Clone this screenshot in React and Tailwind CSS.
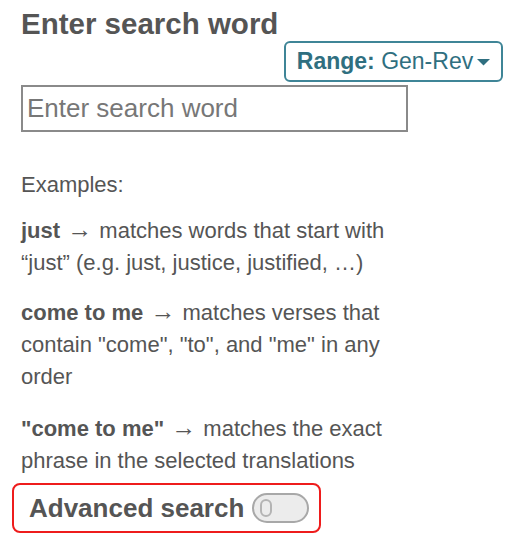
import React, { useState } from 'react';

const Arrow = () => <span className="text-[25px] leading-none px-[1px]">→</span>;

const App = () => {
  const [advanced, setAdvanced] = useState(false);

  return (
    <div className="w-[520px] h-[546px] bg-white text-[#555] font-['Liberation_Sans',Arial,sans-serif] overflow-hidden">
      <div className="pl-[21px] pr-[17px] pt-[5px]">
        {/* Heading */}
        <h2 className="text-[29.5px] font-bold leading-[38px] text-[#555]">Enter search word</h2>

        {/* Range button */}
        <div className="flex justify-end mt-[-2px]">
          <button className="h-[41px] w-[219px] flex items-center justify-center gap-[4px] border-2 border-[#3f8597] rounded-[6px] text-[23px] text-[#2f6f80]">
            <span>
              <span className="font-bold">Range:</span> Gen-Rev
            </span>
            <svg width="13" height="7" viewBox="0 0 13 7" className="mt-[2px]">
              <path d="M0 0 L13 0 L6.5 6.5 Z" fill="#2f6f80" />
            </svg>
          </button>
        </div>

        {/* Search input */}
        <input
          type="text"
          placeholder="Enter search word"
          className="mt-[3px] block w-[387px] h-[47px] border-2 border-[#8a8a8a] px-[4px] text-[26px] placeholder:text-[#777] outline-none"
        />

        {/* Examples */}
        <div className="mt-[37px] w-[400px] text-[22px] leading-[32px] text-[#555]">
          <p>Examples:</p>
          <p className="mt-[14px]">
            <span className="font-bold">just</span> <Arrow /> matches words that start with “just” (e.g. just, justice, justified, …)
          </p>
          <p className="mt-[18px]">
            <span className="font-bold">come to me</span> <Arrow /> matches verses that contain "come", "to", and "me" in any order
          </p>
          <p className="mt-[20px]">
            <span className="font-bold">"come to me"</span> <Arrow /> matches the exact phrase in the selected translations
          </p>
        </div>
      </div>

      {/* Advanced search */}
      <div className="ml-[12px] mt-[6px] w-[309px] h-[50px] border-2 border-[#ee1c1c] rounded-[8px] flex items-center pl-[15px] gap-[8px]">
        <span className="text-[26px] font-bold text-[#555]">Advanced search</span>
        <button
          onClick={() => setAdvanced(!advanced)}
          className="relative w-[57px] h-[30px] rounded-full border-2 border-[#a8a8a8] bg-[#ececec] flex items-center"
        >
          <span className="ml-[6px] w-[12px] h-[18px] rounded-full border-2 border-[#b4b4b4]"></span>
        </button>
      </div>
    </div>
  );
};

export default App;
